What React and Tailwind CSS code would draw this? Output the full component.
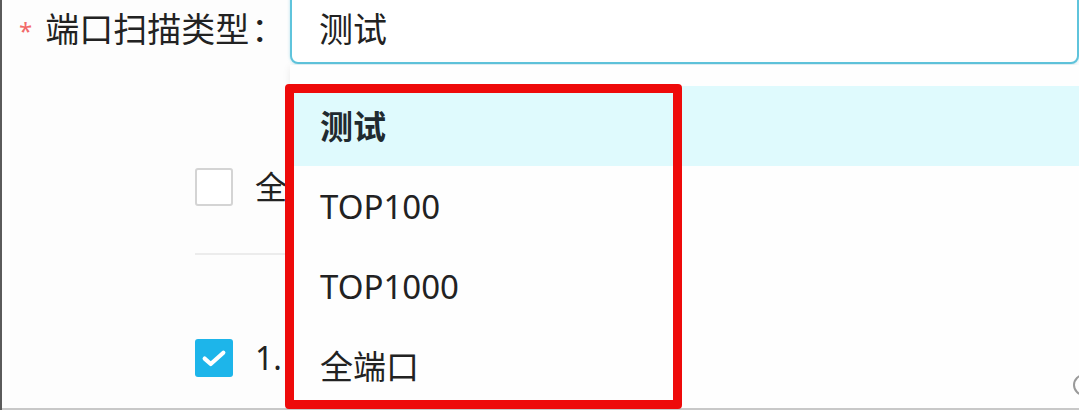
const options = ["测试", "TOP100", "TOP1000", "全端口"];

function Checkbox({ checked }) {
  if (checked) {
    return (
      <div className="w-[38px] h-[38px] rounded-[3px] bg-[#1db5ea] flex items-center justify-center shrink-0">
        <svg width="28" height="28" viewBox="0 0 24 24" fill="none">
          <path d="M4 12.5l5.2 4.6L20 7.5" stroke="white" strokeWidth="3.6" strokeLinecap="round" strokeLinejoin="round" />
        </svg>
      </div>
    );
  }
  return <div className="w-[38px] h-[38px] rounded-[3px] border-2 border-[#d4d4d4] bg-white shrink-0" />;
}

export default function App() {
  return (
    <div
      className="relative w-[1079px] h-[410px] overflow-hidden bg-[#fdfdfd] border-l-2 border-[#5a5a5a] text-[#222]"
      style={{ fontFamily: '"Noto Sans", "Noto Sans CJK SC", sans-serif' }}
    >
      {/* form row */}
      <div className="flex items-start h-[64px]">
        <div className="flex items-center h-[58px] pl-[17px] w-[288px]">
          <span className="text-[#f26a6a] text-[24px] leading-none mr-[13px] mt-[4px]">*</span>
          <span className="text-[34px] leading-none">端口扫描类型</span>
          <span className="text-[34px] leading-none ml-[2px]">：</span>
        </div>
        <div className="flex-1 h-[76px] -mt-[12px] rounded-lg border-2 border-[#5fc4dc] shadow-[0_0_3px_rgba(95,196,220,0.5)] bg-white flex items-center pl-[27px] pt-[5px]">
          <span className="text-[34px] leading-none">测试</span>
        </div>
      </div>

      {/* page content behind the dropdown */}
      <div className="pl-[193px] pt-[104px] flex flex-col">
        <div className="flex items-center gap-[22px]">
          <Checkbox />
          <span className="text-[32px] leading-none">全选</span>
        </div>
        <div className="w-[300px] h-[2px] bg-[#ececec] mt-[47px]" />
        <div className="flex items-center gap-[22px] mt-[84px]">
          <Checkbox checked />
          <span className="text-[32px] leading-none">1.</span>
        </div>
      </div>

      {/* dropdown menu */}
      <div className="absolute left-[288px] top-[65px] right-0 bottom-[2px] bg-[#fefefe] shadow-[0_2px_8px_rgba(0,0,0,0.08)] pt-[21px]">
        {options.map((opt, i) => (
          <div
            key={opt}
            className={
              "h-[80px] flex items-center pl-[30px] text-[33px] leading-none " +
              (i === 0 ? "bg-[#dffafd] font-bold text-[#1f2a30]" : "text-[#222]")
            }
          >
            {opt}
          </div>
        ))}
      </div>

      {/* partial icon at the bottom right */}
      <div className="absolute left-[1071px] top-[374px] w-[22px] h-[22px] rounded-full border-2 border-[#9a9a9a]" />

      {/* bottom edge */}
      <div className="absolute left-0 right-0 bottom-0 h-[2px] bg-[#c8c8c8]" />

      {/* red annotation box */}
      <div className="absolute left-[283px] top-[84px] w-[397px] h-[325px] border-[9px] border-[#ee0a0a] rounded-[4px]" />
    </div>
  );
}
